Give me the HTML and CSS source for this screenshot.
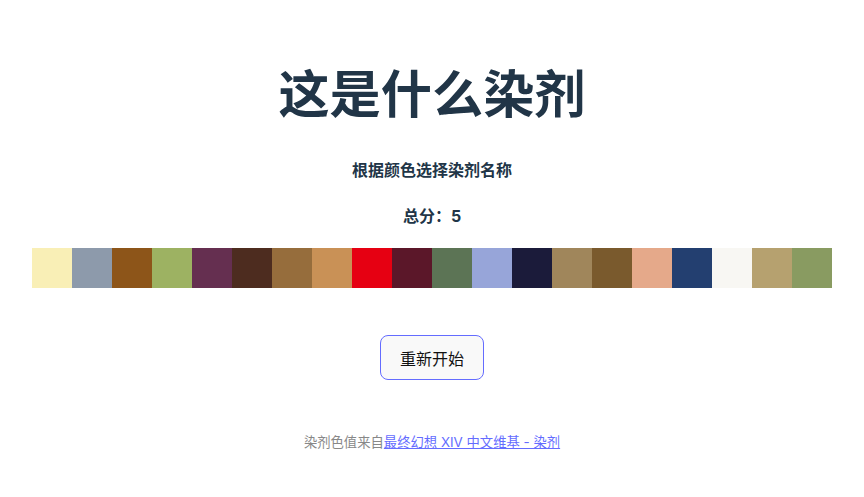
FILE: index.html
```html
<!DOCTYPE html>
<html lang="zh-CN">
<head>
<meta charset="utf-8">
<title>这是什么染剂</title>
<link rel="stylesheet" href="styles.css">
</head>
<body>
<div class="app">
  <h1 class="title">这是什么染剂</h1>
  <h4 class="sub">根据颜色选择染剂名称</h4>
  <h4 class="sub score">总分：5</h4>
  <div class="swatches">
    <span class="sw" style="background:#f9efb6"></span>
    <span class="sw" style="background:#8d9aab"></span>
    <span class="sw" style="background:#8d5519"></span>
    <span class="sw" style="background:#9db262"></span>
    <span class="sw" style="background:#652f50"></span>
    <span class="sw" style="background:#4d2c1f"></span>
    <span class="sw" style="background:#966d3c"></span>
    <span class="sw" style="background:#c99156"></span>
    <span class="sw" style="background:#e60012"></span>
    <span class="sw" style="background:#5b1729"></span>
    <span class="sw" style="background:#5c7455"></span>
    <span class="sw" style="background:#97a5d9"></span>
    <span class="sw" style="background:#1b1b3a"></span>
    <span class="sw" style="background:#a0865b"></span>
    <span class="sw" style="background:#7a5a2d"></span>
    <span class="sw" style="background:#e5a98a"></span>
    <span class="sw" style="background:#233f70"></span>
    <span class="sw" style="background:#f8f7f3"></span>
    <span class="sw" style="background:#b6a16f"></span>
    <span class="sw" style="background:#899b61"></span>
  </div>
  <div class="actions">
    <button class="btn" type="button">重新开始</button>
  </div>
  <p class="footer">染剂色值来自<a href="#">最终幻想 XIV 中文维基 - 染剂</a></p>
</div>
</body>
</html>
```
FILE: styles.css
```css
html, body {
  margin: 0;
  padding: 0;
  background: #ffffff;
}
body {
  font-family: "Inter", "Noto Sans CJK SC", sans-serif;
  color: #213547;
  line-height: 1.5;
  font-weight: 400;
}
.app {
  padding: 32px;
  text-align: center;
}
.title {
  font-size: 51.2px;
  line-height: 1.1;
  font-weight: 700;
  margin: 34px 0 36px;
}
.sub {
  font-size: 16px;
  font-weight: 700;
  margin: 21.3px 0;
}
.score {
  margin-bottom: 20.3px;
}
.swatches {
  display: flex;
  height: 40px;
}
.sw {
  flex: 1 1 0;
  height: 40px;
}
.actions {
  margin-top: 47px;
}
.btn {
  font-family: inherit;
  font-size: 16px;
  font-weight: 400;
  color: #111111;
  background: #f9f9f9;
  border: 1px solid #646cff;
  border-radius: 8px;
  padding: 9.6px 19.2px;
  cursor: pointer;
}
.footer {
  margin: 53px 0 0;
  font-size: 13.33px;
  color: #888888;
}
.footer a {
  color: #646cff;
  text-decoration: underline;
}
```
